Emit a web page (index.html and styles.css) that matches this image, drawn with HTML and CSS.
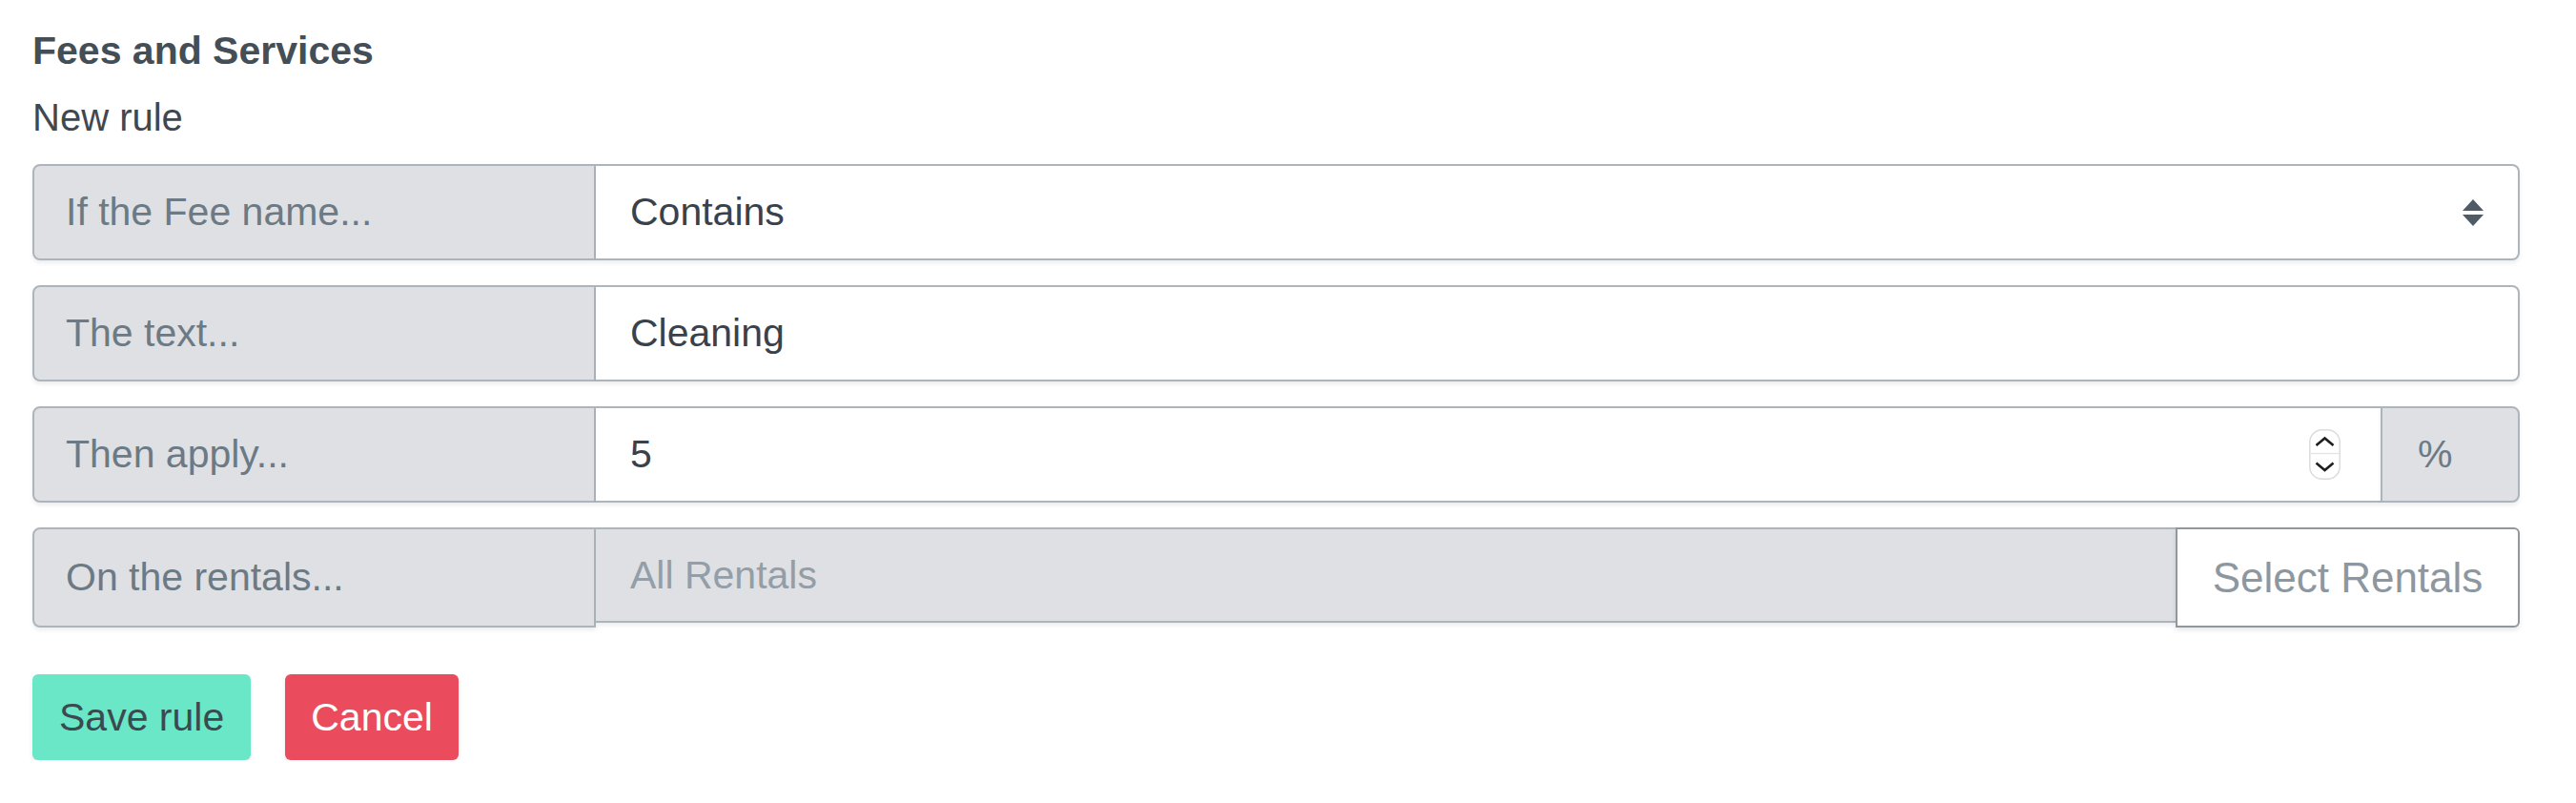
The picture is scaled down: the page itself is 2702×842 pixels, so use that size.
FILE: index.html
```html
<!DOCTYPE html>
<html lang="en">
<head>
<meta charset="utf-8">
<title>Fees and Services</title>
<link rel="stylesheet" href="styles.css">
</head>
<body>
<div class="page">
  <h1 class="title">Fees and Services</h1>
  <div class="subtitle">New rule</div>
  <div class="rules">
    <div class="rule-row">
      <div class="rule-label">If the Fee name...</div>
      <div class="rule-field rule-select">
        <span class="field-text">Contains</span>
        <svg class="select-arrows" width="22" height="28" viewBox="0 0 22 28"><polygon points="11,0 22,12 0,12" fill="#4f5b66"/><polygon points="0,16 22,16 11,28" fill="#4f5b66"/></svg>
      </div>
    </div>
    <div class="rule-row">
      <div class="rule-label">The text...</div>
      <div class="rule-field"><span class="field-text">Cleaning</span></div>
    </div>
    <div class="rule-row">
      <div class="rule-label">Then apply...</div>
      <div class="rule-field rule-number">
        <span class="field-text">5</span>
        <svg class="spinner" width="33" height="53" viewBox="0 0 33 53"><rect x="0.75" y="0.75" width="31.5" height="51.5" rx="13" fill="#fff" stroke="#dcdcdc" stroke-width="1.5"/><line x1="1.5" y1="25.5" x2="31.5" y2="25.5" stroke="#e2e2e2" stroke-width="1.2"/><polyline points="7.5,17 16.5,9.5 25.5,17" fill="none" stroke="#1e1e1e" stroke-width="2.6"/><polyline points="7.5,35.5 16.5,43 25.5,35.5" fill="none" stroke="#1e1e1e" stroke-width="2.6"/></svg>
      </div>
      <div class="rule-addon">%</div>
    </div>
    <div class="rule-row rule-row-rentals">
      <div class="rule-label">On the rentals...</div>
      <div class="rule-field rule-disabled"><span class="field-text">All Rentals</span></div>
      <div class="rule-button">Select Rentals</div>
    </div>
  </div>
  <div class="actions">
    <div class="btn btn-save">Save rule</div>
    <div class="btn btn-cancel">Cancel</div>
  </div>
</div>
</body>
</html>
```
FILE: styles.css
```css
* { box-sizing: border-box; }
html, body { margin: 0; padding: 0; background: #ffffff; }
body { font-family: "Liberation Sans", Arial, sans-serif; }

.page {
  padding: 29px 59px 0 34px;
}

.title {
  margin: 0 0 22px;
  font-size: 41px;
  line-height: 48px;
  font-weight: 700;
  color: #444e57;
}

.subtitle {
  margin: 0 0 25px;
  font-size: 40px;
  line-height: 48px;
  color: #3f4850;
}

.rules {
  display: flex;
  flex-direction: column;
  gap: 26px;
}

.rule-row {
  display: flex;
  height: 101px;
}

.rule-label {
  flex: 0 0 591px;
  display: flex;
  align-items: center;
  padding-left: 33px;
  background: #dee0e3;
  border: 2px solid #adb5bc;
  border-radius: 8px 0 0 8px;
  font-size: 41px;
  color: #6c7a85;
  box-shadow: 0 3px 4px rgba(0, 0, 0, 0.07);
}

.rule-field {
  flex: 1;
  display: flex;
  align-items: center;
  padding-left: 36px;
  background: #ffffff;
  border: 2px solid #adb5bc;
  border-left: 0;
  border-radius: 0 8px 8px 0;
  font-size: 41px;
  color: #39424b;
  box-shadow: 0 3px 4px rgba(0, 0, 0, 0.07);
}

.field-text { flex: 1; }

.rule-select { padding-right: 36px; }
.select-arrows { display: block; }

.rule-number {
  border-right: 0;
  border-radius: 0;
  padding-right: 42px;
}
.spinner { display: block; }

.rule-addon {
  flex: 0 0 146px;
  display: flex;
  align-items: center;
  padding-left: 37px;
  background: #dee0e3;
  border: 2px solid #adb5bc;
  border-radius: 0 8px 8px 0;
  font-size: 41px;
  color: #6d7a85;
  box-shadow: 0 3px 4px rgba(0, 0, 0, 0.07);
}

.rule-row-rentals {
  height: 105px;
  align-items: flex-start;
}
.rule-row-rentals .rule-label { height: 105px; }

.rule-disabled {
  height: 100px;
  background: #dee0e3;
  border-right: 0;
  border-radius: 0;
  color: #939ea8;
}

.rule-button {
  flex: 0 0 361px;
  height: 105px;
  display: flex;
  align-items: center;
  justify-content: center;
  background: #ffffff;
  border: 2px solid #8f989f;
  border-radius: 0 6px 6px 0;
  font-size: 44px;
  color: #8d979f;
  box-shadow: 0 3px 5px rgba(0, 0, 0, 0.09);
}

.actions {
  display: flex;
  gap: 36px;
  margin-top: 49px;
}

.btn {
  height: 90px;
  display: flex;
  align-items: center;
  padding: 0 27px;
  border-radius: 6px;
  font-size: 41px;
  box-shadow: 0 3px 5px rgba(0, 0, 0, 0.09);
}

.btn-save {
  background: #69e7c7;
  color: #3b4a4f;
  padding: 0 28px;
}

.btn-cancel {
  background: #eb4c5d;
  color: #ffffff;
}
```
